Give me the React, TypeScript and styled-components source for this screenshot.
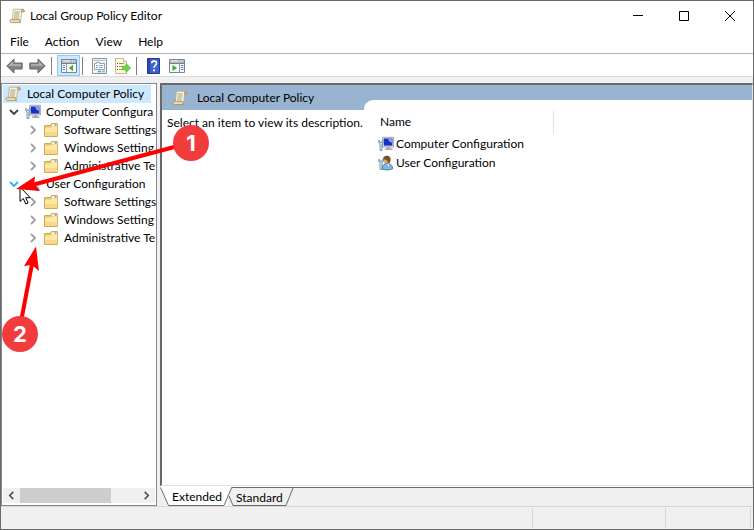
import React from 'react';
import styled, { createGlobalStyle } from 'styled-components';

const GlobalStyle = createGlobalStyle`
  *, *::before, *::after { box-sizing: border-box; }
  body { margin: 0; }
  body, button {
    font-family: Lato, "Open Sans", sans-serif;
    font-size: 12px;
    line-height: 18px;
    color: #000;
  }
  button { margin: 0; padding: 0; border: 0; background: none; }
  ul { margin: 0; padding: 0; list-style: none; }
  svg { display: block; flex: none; }
`;

const Window = styled.div`
  position: relative;
  display: flex;
  flex-direction: column;
  min-height: 100vh;
  background: #fff;
  border: 1px solid #6a6a6a;
`;

const TitleBar = styled.header`
  display: flex;
  align-items: center;
  height: 30px;
  padding-left: 8px;
  gap: 5px;
`;

const Title = styled.h1`
  flex: 1;
  margin: 0;
  font-size: 12px;
  font-weight: 400;
`;

const WindowButtons = styled.div`
  display: flex;
  align-self: stretch;
`;

const WindowButton = styled.button`
  display: grid;
  place-items: center;
  width: 46px;
`;

const MenuBar = styled.nav`
  display: flex;
  align-items: center;
  height: 23px;
  padding-left: 1px;
  border-bottom: 1px solid #b2b3bd;
`;

const MenuItem = styled.button`
  padding: 0 8px;
`;

const Toolbar = styled.div`
  display: flex;
  align-items: center;
  height: 23px;
  padding: 1px 2px 0;
  border-bottom: 1px solid #d9d9d9;
`;

const ToolButton = styled.button<{ $active?: boolean }>`
  display: grid;
  place-items: center;
  width: 23px;
  height: 21px;
  border: 1px solid ${(p) => (p.$active ? '#90c8f6' : 'transparent')};
  background: ${(p) => (p.$active ? '#cce8ff' : 'transparent')};
`;

const ToolSeparator = styled.span`
  width: 1px;
  height: 18px;
  margin: 0 5px 0 2px;
  background: #808080;
`;

const Workspace = styled.main`
  flex: 1;
  display: flex;
  gap: 3px;
  padding: 6px 0 0;
  background: #f0f0f0;
`;

const TreePane = styled.aside`
  flex: none;
  display: flex;
  flex-direction: column;
  width: 156px;
  padding: 1px 1px 2px;
  background: #fff;
  border: 1px solid #828790;
  overflow: hidden;
`;

const Tree = styled.ul`
  flex: 1;
`;

const TreeRow = styled.li<{ $level: number; $selected?: boolean }>`
  display: flex;
  align-items: center;
  height: 18px;
  padding-left: ${(p) => [2, 5, 24][p.$level]}px;
  margin-right: ${(p) => (p.$selected ? 4 : 0)}px;
  background: ${(p) => (p.$selected ? '#cce8ff' : 'transparent')};
  white-space: nowrap;
`;

const Expander = styled.button`
  display: grid;
  place-items: center;
  flex: none;
  width: 12px;
  height: 18px;
`;

const TreeIcon = styled.span<{ $level: number }>`
  display: grid;
  place-items: center;
  flex: none;
  width: 16px;
  margin: 0 ${(p) => (p.$level === 0 ? 6 : 5)}px 0 ${(p) => [0, 5, 4][p.$level]}px;
`;

const ScrollBar = styled.div`
  display: grid;
  grid-template-columns: 17px 91px 1fr 17px;
  height: 15px;
  background: #f0f0f0;
`;

const ScrollButton = styled.button`
  display: grid;
  place-items: center;
`;

const ScrollThumb = styled.div`
  background: #cdcdcd;
`;

const ContentPane = styled.section`
  flex: 1;
  display: flex;
  flex-direction: column;
`;

const ContentBody = styled.div`
  flex: 1;
  display: grid;
  grid-template-columns: 202px 1fr;
  background: #99b4d1;
  border: solid;
  border-width: 2px 1px 1px 2px;
  border-color: #696969 #e3e3e3 #e3e3e3 #696969;
`;

const Extended = styled.div`
  display: flex;
  flex-direction: column;
`;

const ContentHeader = styled.h2`
  display: flex;
  align-items: center;
  gap: 9px;
  height: 25px;
  margin: 0;
  padding-left: 10px;
  font-size: 12px;
  font-weight: 400;
`;

const Description = styled.p`
  flex: 1;
  margin: 0;
  padding: 4px 0 0 5px;
  background: #fff;
  white-space: nowrap;
`;

const ListPane = styled.div`
  margin-top: 15px;
  padding: 10px 14px;
  background: #fff;
  border-top-left-radius: 9px;
`;

const ListHeader = styled.div`
  width: 176px;
  height: 24px;
  padding: 3px 2px;
  border-right: 1px solid #e0e0e0;
`;

const ListItem = styled.li`
  display: flex;
  align-items: center;
  gap: 2px;
  height: 19px;
`;

const Tabs = styled.div`
  display: flex;
  height: 20px;
  padding-top: 1px;
  background: #fff;
`;

const TabStrip = styled.div`
  flex: 1;
  display: flex;
  border-top: 1px solid #696969;
  background: #f0f0f0;
`;

const Tab = styled.button<{ $width: number }>`
  display: grid;
  width: ${(p) => p.$width}px;
  height: 19px;
  & > * { grid-area: 1 / 1; }
`;

const TabLabel = styled.span<{ $inset: number }>`
  align-self: end;
  padding-left: ${(p) => p.$inset}px;
  text-align: left;
`;

const StatusBar = styled.footer`
  display: grid;
  grid-template-columns: 1fr 133px 85px;
  height: 23px;
  padding: 1px 2px;
  background: #f0f0f0;
  border-top: 1px solid #d7d7d7;
`;

const StatusCell = styled.div`
  border-right: 1px solid #d7d7d7;
`;

const Annotations = styled.svg`
  position: absolute;
  left: -1px;
  top: -1px;
  pointer-events: none;
`;

const Callout = styled.span<{ $x: number; $y: number }>`
  position: absolute;
  left: ${(p) => p.$x}px;
  top: ${(p) => p.$y}px;
  display: grid;
  place-items: center;
  width: 36px;
  height: 36px;
  border-radius: 50%;
  background: #f23c3c;
  color: #fff;
  font: 700 22px/36px Inter, sans-serif;
`;

const ScrollIcon = () => (
  <svg width="16" height="16" viewBox="0 0 16 16">
    <path d="M4.500 1.200h8.700c1.600 0 2.300 1 2 2.600h-2.600l-1 9.400H3.200L4.200 3.400z" fill="#fbf4dc" stroke="#b5a67e" strokeWidth=".8" />
    <path d="M13.200 1.200c-1.100.1-1 1.600-.7 2.600h2.700c.3-1.600-.4-2.600-2-2.600z" fill="#cdb681" stroke="#9b875a" strokeWidth=".6" />
    <path d="M2.200 11.600h8.500c-.4 1.500.2 2.700 1.300 3H2.400C.6 14.600.3 12 2.200 11.600z" fill="#eadcb4" stroke="#a08c60" strokeWidth=".8" />
    <path d="M5.600 4h5M5.400 6h5M5.100 8h5M4.800 10h5" stroke="#9b937c" strokeWidth=".9" />
  </svg>
);

const FolderIcon = () => (
  <svg width="14" height="14" viewBox="0 0 14 14">
    <path d="M.5 2.500h6l1-2h5.800v13H.5z" fill="#e8c568" stroke="#cfab55" />
    <path d="M8 1.300h4.600v1.800H8z" fill="#fff" />
    <path d="M10.400 1.500h2v1.200h-2z" fill="#3b91df" />
    <path d="M1 4.500h6l1-1.200h5V13H1z" fill="#fde6a6" />
    <path d="M1 9h12v4H1z" fill="#f7d88a" />
  </svg>
);

const ComputerIcon = () => (
  <svg width="16" height="16" viewBox="0 0 16 16">
    <path d="M4.500 1.300h11.100v9.700H4.500z" fill="#dedede" stroke="#9a9aa2" strokeWidth=".8" />
    <path d="M5.800 2.500h8.600v7.100H5.800z" fill="#172fc4" />
    <path d="M10 2.500h4.400v4.200C12 6.800 10.300 5.200 10 2.500z" fill="#7d9cf8" />
    <path d="M8.700 11.200h3.500v1.300h2.200v1.400H6.900v-1.400h1.800z" fill="#a8a8a8" />
    <path d="M.8 4.200v2.600l1.200 1v6.700h2V7.800l1.200-1V4.200L4 5.200v1.200H2V5.200z" fill="#d6ebf6" stroke="#5c869c" strokeWidth=".8" />
  </svg>
);

const UserIcon = () => (
  <svg width="16" height="16" viewBox="0 0 16 16">
    <path d="M4.500 14.200c-.6-3.500 1.200-5.500 4.700-5.800 3.800.2 5.600 2.400 5.300 5.400-2.400 1.400-7 1.500-10 .4z" fill="#82b4dd" stroke="#34658e" strokeWidth=".8" />
    <circle cx="8.600" cy="4.800" r="3.500" fill="#d7a76c" />
    <path d="M7.500 1c3-.9 5 .6 5.100 3 0 2-.3 3.200-1.400 4.200-1 .3-1.600-.6-1.400-2C8.900 4.600 7 4.700 5.100 4.500 4.900 2.500 6 1.300 7.500 1z" fill="#76522f" />
    <path d="m8 8.600 1.400 1.600 1.600-1.600.2 3z" fill="#fff" />
    <path d="M.8 4.200v2.600l1.200 1v6.700h2V7.800l1.200-1V4.200L4 5.200v1.200H2V5.200z" fill="#d6ebf6" stroke="#5c869c" strokeWidth=".8" />
  </svg>
);

const UserTorsoIcon = () => (
  <svg width="16" height="16" viewBox="0 0 16 16">
    <path d="M8.500 9.500c3.600.2 5.400 2 5.500 4.700-2 .4-3.600-.4-4.500-2z" fill="#82b4dd" stroke="#34658e" strokeWidth=".8" />
  </svg>
);

const ArrowIcon = ({ flip }: { flip?: boolean }) => (
  <svg width="17" height="16" viewBox="0 0 17 16">
    <g transform={flip ? 'matrix(-1 0 0 1 17 0)' : undefined}>
      <path d="M.8 8 8 1v4h8.200v6H8v4z" fill="#858585" stroke="#666" />
      <path d="M2.600 7.700 7 3.400v2.800h8v1.500z" fill="#b5b5b5" />
    </g>
  </svg>
);

const PaneIcon = ({ right }: { right?: boolean }) => (
  <svg width="16" height="14" viewBox="0 0 16 14">
    <path d="M.5.5h15v13H.5z" fill="#f6f8f9" stroke="#788590" />
    <path d="M1 1h14v3H1z" fill="#a9b5bf" />
    <path d="M1.500 2h8M11 2h1M13 2h1" stroke="#fff" />
    <path d="M1 4.500h14" stroke="#788590" />
    {right ? (
      <>
        <path d="M10.500 5v8" stroke="#8b99a6" />
        <path d="M3.500 6v6L8 9z" fill="#38ae22" />
        <path d="M12 6.500h2.500M12 8.500h2.500M12 10.500h2.500" stroke="#5690c7" />
      </>
    ) : (
      <>
        <path d="M5.500 5v8" stroke="#8b99a6" />
        <path d="M1.700 6.500H4M1.700 8.500H4M1.700 10.500H4" stroke="#5690c7" />
        <path d="M12 5.800v6.400L8 9z" fill="#38ae22" />
      </>
    )}
  </svg>
);

const PropertiesIcon = () => (
  <svg width="15" height="16" viewBox="0 0 15 16">
    <path d="M.5.5h14v15H.5z" fill="#f2f4f5" stroke="#8a949c" />
    <path d="M2 2.500h11" stroke="#b3bdc5" />
    <path d="M2.500 5.500h2v-1h3v1h5v6h-10z" fill="#fff" stroke="#8fa5b7" />
    <path d="M4 7.500h1.500M4 9.500h1.500" stroke="#348fc7" />
    <path d="M6.500 7.500h4.700M6.500 9.500h4.700" stroke="#9fafbc" />
    <path d="M6 13.500h3" stroke="#28aee7" strokeWidth="1.600" />
    <path d="M10 13.500h3" stroke="#a3acb3" strokeWidth="1.600" />
  </svg>
);

const ExportIcon = () => (
  <svg width="16" height="16" viewBox="0 0 16 16">
    <path d="M.5.5h8l3 3v12H.5z" fill="#fff8dc" stroke="#c4b88f" />
    <path d="M8.500.5v3h3" fill="#fff" stroke="#c4b88f" />
    <path d="M2 5.500h1M2 8.500h1M2 11.500h1" stroke="#555" />
    <path d="M4 5.500h5M4 8.500h3M4 11.500h3" stroke="#9a9075" />
    <path d="M7.500 8.200H11V5.600L15.600 10 11 14.400v-2.600H7.500z" fill="#6bd63d" stroke="#4fae30" strokeWidth=".7" />
  </svg>
);

const HelpIcon = () => (
  <svg width="13" height="16" viewBox="0 0 13 16">
    <path d="M.5.5h12v15H.5z" fill="#3e62cb" stroke="#203a91" />
    <path d="M1 1h2v14H1z" fill="#294aad" />
    <path d="M4.700 5.200C4.800 2.300 9.500 2.400 9.500 5.200c0 2-2.400 2.200-2.400 4.600" fill="none" stroke="#fff" strokeWidth="1.700" />
    <path d="M6.100 11.400H8v1.900H6.100z" fill="#fff" />
  </svg>
);

const Chevron = ({ d, color, size = 10 }: { d: string; color: string; size?: number }) => (
  <svg width={size} height={size} viewBox="0 0 10 10" fill="none" stroke={color} strokeWidth="1.800">
    <path d={d} />
  </svg>
);

const DOWN = 'M1 3l4 4 4-4';
const RIGHT = 'M3 1l4 4-4 4';
const LEFT = 'M7 1 3 5l4 4';

type Node = { level: number; label: string; icon: React.ReactNode; hot?: boolean };

const folders: Node[] = ['Software Settings', 'Windows Setting', 'Administrative Te'].map((label) => ({
  level: 2,
  label,
  icon: <FolderIcon />,
}));

const nodes: Node[] = [
  { level: 0, label: 'Local Computer Policy', icon: <ScrollIcon /> },
  { level: 1, label: 'Computer Configura', icon: <ComputerIcon /> },
  ...folders,
  { level: 1, label: 'User Configuration', icon: <UserTorsoIcon />, hot: true },
  ...folders,
];

export default function App() {
  return (
    <>
      <GlobalStyle />
      <Window>
        <TitleBar>
          <ScrollIcon />
          <Title>Local Group Policy Editor</Title>
          <WindowButtons>
            <WindowButton aria-label="Minimize">
              <svg width="10" height="10"><path d="M0 4.500h10" stroke="#000" /></svg>
            </WindowButton>
            <WindowButton aria-label="Maximize">
              <svg width="10" height="10"><path d="M.5.5h9v9h-9z" fill="none" stroke="#000" /></svg>
            </WindowButton>
            <WindowButton aria-label="Close">
              <svg width="10" height="10"><path d="m0 0 10 10M10 0 0 10" stroke="#000" /></svg>
            </WindowButton>
          </WindowButtons>
        </TitleBar>

        <MenuBar>
          {['File', 'Action', 'View', 'Help'].map((m) => <MenuItem key={m}>{m}</MenuItem>)}
        </MenuBar>

        <Toolbar>
          <ToolButton aria-label="Back"><ArrowIcon /></ToolButton>
          <ToolButton aria-label="Forward"><ArrowIcon flip /></ToolButton>
          <ToolSeparator />
          <ToolButton aria-label="Show or hide console tree" $active><PaneIcon /></ToolButton>
          <ToolSeparator />
          <ToolButton aria-label="Properties"><PropertiesIcon /></ToolButton>
          <ToolButton aria-label="Export list"><ExportIcon /></ToolButton>
          <ToolSeparator />
          <ToolButton aria-label="Help"><HelpIcon /></ToolButton>
          <ToolButton aria-label="Show or hide action pane"><PaneIcon right /></ToolButton>
        </Toolbar>

        <Workspace>
          <TreePane>
            <Tree>
              {nodes.map((n, i) => (
                <TreeRow key={i} $level={n.level} $selected={i === 0}>
                  {n.level > 0 && (
                    <Expander aria-label={`Toggle ${n.label}`}>
                      <Chevron
                        d={n.level === 1 ? DOWN : RIGHT}
                        color={n.hot ? '#27b7ee' : n.level === 1 ? '#404040' : '#a0a0a0'}
                      />
                    </Expander>
                  )}
                  <TreeIcon $level={n.level}>{n.icon}</TreeIcon>
                  {n.label}
                </TreeRow>
              ))}
            </Tree>
            <ScrollBar>
              <ScrollButton aria-label="Scroll left"><Chevron d={LEFT} color="#505050" size={9} /></ScrollButton>
              <ScrollThumb />
              <span />
              <ScrollButton aria-label="Scroll right"><Chevron d={RIGHT} color="#505050" size={9} /></ScrollButton>
            </ScrollBar>
          </TreePane>

          <ContentPane>
            <ContentBody>
              <Extended>
                <ContentHeader><ScrollIcon />Local Computer Policy</ContentHeader>
                <Description>Select an item to view its description.</Description>
              </Extended>
              <ListPane>
                <ListHeader>Name</ListHeader>
                <ul>
                  <ListItem><ComputerIcon />Computer Configuration</ListItem>
                  <ListItem><UserIcon />User Configuration</ListItem>
                </ul>
              </ListPane>
            </ContentBody>
            <Tabs>
              <Tab $width={68}>
                <svg width="68" height="19" viewBox="0 0 68 19" overflow="visible">
                  <path d="M0 0v19h8L0 1z" fill="#f0f0f0" />
                  <path d="M.5.5l8 18H64" fill="none" stroke="#696969" />
                </svg>
                <TabLabel $inset={12}>Extended</TabLabel>
              </Tab>
              <TabStrip>
                <Tab $width={70}>
                  <svg width="70" height="18" viewBox="0 0 70 18" overflow="visible">
                    <path d="M-4 17 3.500-1H-1v18z" fill="#fff" />
                    <path d="M-4 17.500 3.500 0M1 8l4 9.500h53L65 0" fill="none" stroke="#696969" />
                  </svg>
                  <TabLabel $inset={8}>Standard</TabLabel>
                </Tab>
              </TabStrip>
            </Tabs>
          </ContentPane>
        </Workspace>

        <StatusBar><StatusCell /><StatusCell /><StatusCell /></StatusBar>

        <Annotations width="220" height="360" viewBox="0 0 220 360" aria-hidden="true">
          <path d="M20 187v14.500l3.300-3 2.500 5.500 2.300-1-2.400-5.300h4.600z" fill="#fff" stroke="#000" />
          <path d="M178 146 34 184.500" stroke="#f00" strokeWidth="4" />
          <path d="M16 189 35 176.500l-1 8 6 6.500z" fill="#f00" />
          <path d="M21.500 319 32 264" stroke="#f00" strokeWidth="4" />
          <path d="M36 246.500 24 266l8-1 7 6z" fill="#f00" />
        </Annotations>
        <Callout $x={172} $y={124}>1</Callout>
        <Callout $x={1} $y={315}>2</Callout>
      </Window>
    </>
  );
}
